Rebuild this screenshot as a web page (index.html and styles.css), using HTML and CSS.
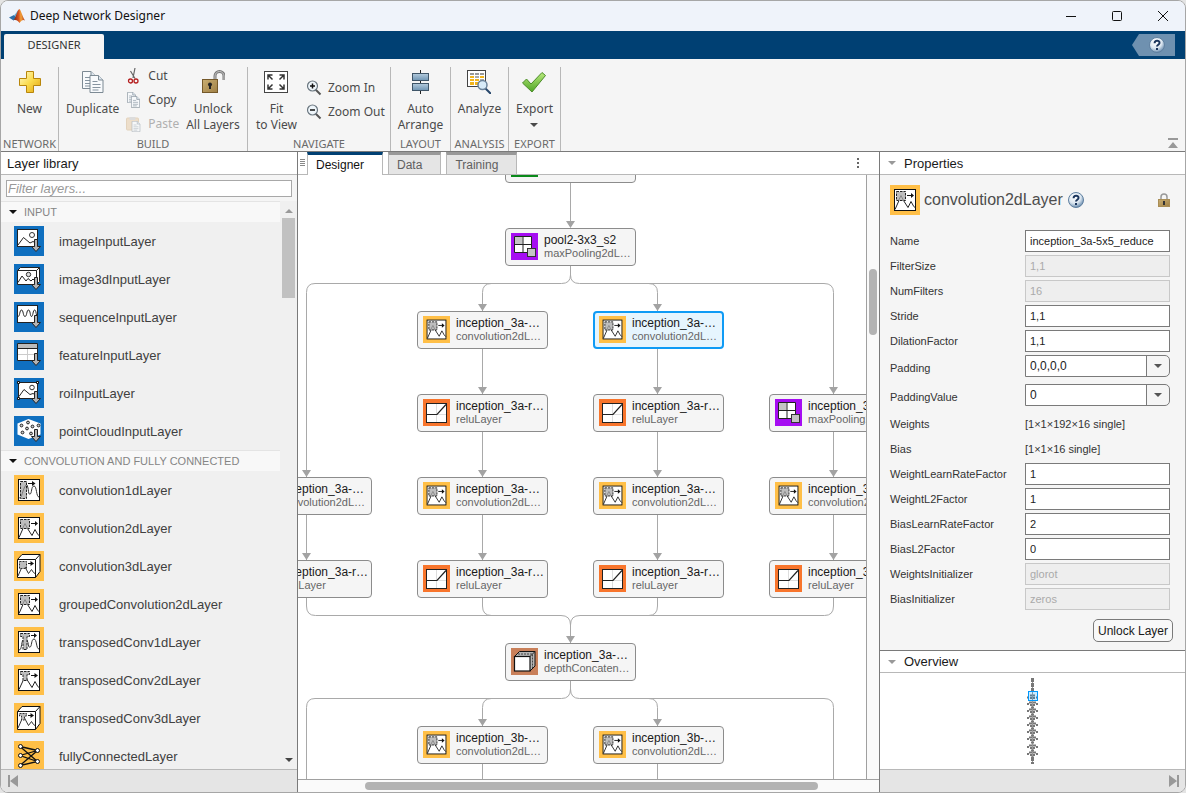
FILE: index.html
```html
<!DOCTYPE html>
<html lang="en">
<head>
    <meta charset="UTF-8">
    <meta name="viewport" content="width=device-width, initial-scale=1.0">
    <title>Deep Network Designer</title>
    <link rel="stylesheet" href="styles.css">
</head>
<body>
    <!-- Shared icons -->
    <svg class="defs" width="0" height="0" aria-hidden="true">
        <defs>
            <linearGradient id="gold" x1="0" y1="0" x2="1" y2="1">
                <stop offset="0" stop-color="#fffbd0"/>
                <stop offset="0.5" stop-color="#fbdc4c"/>
                <stop offset="1" stop-color="#e0a010"/>
            </linearGradient>
            <linearGradient id="brass" x1="0" y1="0" x2="1" y2="1">
                <stop offset="0" stop-color="#c9ae72"/>
                <stop offset="1" stop-color="#a08045"/>
            </linearGradient>
            <linearGradient id="steel" x1="0" y1="0" x2="0" y2="1">
                <stop offset="0" stop-color="#b4cbdd"/>
                <stop offset="1" stop-color="#6f95b4"/>
            </linearGradient>
            <linearGradient id="green" x1="0" y1="0" x2="0" y2="1">
                <stop offset="0" stop-color="#b9ea7c"/>
                <stop offset="1" stop-color="#4fa526"/>
            </linearGradient>
            <radialGradient id="ball" cx="0.4" cy="0.3" r="0.7">
                <stop offset="0" stop-color="#ffffff"/>
                <stop offset="0.6" stop-color="#dbe6f0"/>
                <stop offset="1" stop-color="#6d8fb0"/>
            </radialGradient>
            <linearGradient id="flame" x1="0" y1="0" x2="1" y2="0">
                <stop offset="0" stop-color="#7a1f14"/>
                <stop offset="0.45" stop-color="#d9531e"/>
                <stop offset="0.65" stop-color="#f3a33a"/>
                <stop offset="1" stop-color="#b5371b"/>
            </linearGradient>
        </defs>
        <symbol id="down-arrow" viewBox="0 0 30 30">
            <path d="M20.500 13.500h3v7h3l-4.500 5-4.500-5h3z" fill="#b3b3b3" stroke="#222"/>
        </symbol>
        <symbol id="cube" viewBox="0 0 30 30">
            <path d="M3.500 8.500l4.500-5h18v17l-4.500 6h-18z" fill="#fff" stroke="#111"/>
            <path d="M3.500 8.500h18v18M21.500 8.500l4.500-5" fill="none" stroke="#111"/>
        </symbol>
        <symbol id="image-input" viewBox="0 0 30 30">
            <rect width="30" height="30" fill="#0f6fbf"/>
            <rect x="3.500" y="3.500" width="20" height="17" fill="#fff" stroke="#222"/>
            <path d="M4 19l5.500-7.500 6.500 5.500 3-1.500 2 1" fill="none" stroke="#222"/>
            <circle cx="18" cy="9" r="2.500" fill="none" stroke="#333"/>
            <use href="#down-arrow"/>
        </symbol>
        <symbol id="image3d-input" viewBox="0 0 30 30">
            <rect width="30" height="30" fill="#0f6fbf"/>
            <path d="M3.500 6.500l3-3h19v14l-3 3h-19z" fill="#fff" stroke="#222"/>
            <path d="M3.500 6.500h19l3-3M22.500 6.500v14M4 18.500l4-6.500 4 5 2-2.500 3 2.500 2-2 2 2" fill="none" stroke="#222"/>
            <circle cx="14.500" cy="10.500" r="2.200" fill="#ddd" stroke="#333"/>
            <use href="#down-arrow"/>
        </symbol>
        <symbol id="sequence-input" viewBox="0 0 30 30">
            <rect width="30" height="30" fill="#0f6fbf"/>
            <rect x="3.500" y="3.500" width="20" height="17" fill="#fff" stroke="#222"/>
            <path d="M4 14.500c2 0 1.500-6.500 3.500-6.500s1.500 6.500 3.500 6.500 1.500-6.500 3.500-6.500 1.500 6.500 3 6.500 1.500-6.500 3-6.500 1.500 3 2 5" fill="none" stroke="#222"/>
            <use href="#down-arrow"/>
        </symbol>
        <symbol id="feature-input" viewBox="0 0 30 30">
            <rect width="30" height="30" fill="#0f6fbf"/>
            <rect x="3.500" y="3.500" width="20" height="17" fill="#fff"/>
            <path d="M4 4h19v4H4z" fill="#bbb"/>
            <path d="M13.500 8v12M4 14.500h19" stroke="#ccc"/>
            <path d="M3.500 3.500h20v17h-20zM4 8.500h19" fill="none" stroke="#222"/>
            <use href="#down-arrow"/>
        </symbol>
        <symbol id="roi-input" viewBox="0 0 30 30">
            <rect width="30" height="30" fill="#0f6fbf"/>
            <rect x="4.500" y="4.500" width="19" height="16" fill="#fff" stroke="#222"/>
            <path d="M5 18.500l5-7 6 5 3-1 2 1" fill="none" stroke="#222"/>
            <circle cx="18" cy="9.500" r="2.300" fill="none" stroke="#333"/>
            <path d="M3.500 3.500h2v2h-2zM22.500 3.500h2v2h-2zM3.500 19.500h2v2h-2z" fill="#fff" stroke="#111"/>
            <use href="#down-arrow"/>
        </symbol>
        <symbol id="cloud-input" viewBox="0 0 30 30">
            <rect width="30" height="30" fill="#0f6fbf"/>
            <path d="M3.500 7.500l11-4.500 12 4.500v11l-12 4.500-11-4.500z" fill="#fff"/>
            <g fill="#ccc" stroke="#222">
                <circle cx="14" cy="6.500" r="1.400"/><circle cx="7.500" cy="9.500" r="1.400"/>
                <circle cx="18.500" cy="10.500" r="1.400"/><circle cx="24.500" cy="9.500" r="1.400"/>
                <circle cx="13" cy="12.500" r="1.400"/><circle cx="8.500" cy="16.500" r="1.400"/>
                <circle cx="17" cy="17.500" r="1.400"/>
            </g>
            <use href="#down-arrow"/>
        </symbol>
        <symbol id="conv1d" viewBox="0 0 30 30">
            <rect width="30" height="30" fill="#ffbf47"/>
            <rect x="4.500" y="4.500" width="21" height="21" fill="#fff" stroke="#111"/>
            <rect x="6.500" y="6.500" width="6" height="17" fill="#bdbdbd" stroke="#222" stroke-dasharray="2.500 1"/>
            <path d="M5 23c3.500 0 3-8 7-13" fill="none" stroke="#777"/>
            <path d="M13 10c2 4 1 10 3 9 2 0 1-8 4-8s2 11 5 11" fill="none" stroke="#333"/>
            <path d="M14 8.500h5" stroke="#111"/><path d="M18 6l3.500 2.500-3.500 2.500z" fill="#111"/>
        </symbol>
        <symbol id="conv2d" viewBox="0 0 30 30">
            <rect width="30" height="30" fill="#ffbf47"/>
            <rect x="4.500" y="4.500" width="21" height="21" fill="#fff" stroke="#111"/>
            <rect x="6.500" y="6.500" width="9" height="9" fill="#bdbdbd" stroke="#222" stroke-dasharray="2.500 1"/>
            <path d="M5 24.500l4-9M13.500 15.500l4.500 7 3-6 2.500 4.500 2 2" fill="none" stroke="#222"/>
            <path d="M8.500 15.500l2.500-5 2.500 5" fill="none" stroke="#888"/>
            <path d="M17 10.500h5" stroke="#111"/><path d="M21 8l3 2.500-3 2.500z" fill="#111"/>
        </symbol>
        <symbol id="conv3d" viewBox="0 0 30 30">
            <rect width="30" height="30" fill="#ffbf47"/>
            <use href="#cube"/>
            <rect x="5.500" y="10.500" width="7" height="7" fill="#bdbdbd" stroke="#333" stroke-dasharray="2 1"/>
            <path d="M4 25l3.500-8M11 16l3.500 6.500 3-4 2 3 1.500 1" fill="none" stroke="#333"/>
            <path d="M14 12.500h3" stroke="#111"/><path d="M16.500 10l3.500 2.500-3.500 2.500z" fill="#111"/>
        </symbol>
        <symbol id="tconv1d" viewBox="0 0 30 30">
            <rect width="30" height="30" fill="#ffbf47"/>
            <rect x="4.500" y="4.500" width="21" height="21" fill="#fff" stroke="#111"/>
            <path d="M5 23c3 0 2-7 4-10M13 13c2 4 1 8 3 7 2 0 1-8 4-8s2 10 5 10" fill="none" stroke="#333"/>
            <path d="M6.500 6.500h9v3h-2.500v13h-4v-13h-2.500z" fill="#bdbdbd" stroke="#222" stroke-dasharray="2.500 1"/>
            <path d="M17 8.500h4" stroke="#111"/><path d="M20 6l3 2.500-3 2.500z" fill="#111"/>
        </symbol>
        <symbol id="tconv2d" viewBox="0 0 30 30">
            <rect width="30" height="30" fill="#ffbf47"/>
            <rect x="4.500" y="4.500" width="21" height="21" fill="#fff" stroke="#111"/>
            <path d="M5 24.500l5.500-12M12 13l6 9.500 3-6 2.500 4.500 2 2" fill="none" stroke="#222"/>
            <path d="M6.500 6.500h9v3h-2.500v6h-4v-6h-2.500z" fill="#bdbdbd" stroke="#222" stroke-dasharray="2.500 1"/>
            <path d="M17 10.500h4" stroke="#111"/><path d="M20.500 8l3.500 2.500-3.500 2.500z" fill="#111"/>
        </symbol>
        <symbol id="tconv3d" viewBox="0 0 30 30">
            <rect width="30" height="30" fill="#ffbf47"/>
            <use href="#cube"/>
            <path d="M4 25l4-9M10.500 15l4 7.500 3-4 2 3 1.500 1" fill="none" stroke="#333"/>
            <path d="M5.500 10.500h7v2.500h-2v4h-3v-4h-2z" fill="#bdbdbd" stroke="#333" stroke-dasharray="2 1"/>
            <path d="M14 12.500h3" stroke="#111"/><path d="M16.500 10l3.500 2.500-3.500 2.500z" fill="#111"/>
        </symbol>
        <symbol id="fully" viewBox="0 0 30 30">
            <rect width="30" height="30" fill="#ffbf47"/>
            <path d="M6 5.500L23.500 9.500 6 14.500 23.500 20.500 6 24.500 23.500 9.500M23.500 20.500L6 5.500" fill="none" stroke="#111" stroke-width="1.300"/>
            <g fill="#fff" stroke="#111">
                <circle cx="6.500" cy="5.500" r="2"/><circle cx="6.500" cy="14.500" r="2"/><circle cx="6.500" cy="24.500" r="2"/>
                <circle cx="23.500" cy="9.500" r="2"/><circle cx="23.500" cy="20.500" r="2"/>
            </g>
        </symbol>
        <symbol id="pool" viewBox="0 0 27 27">
            <rect width="27" height="27" fill="#a60df2"/>
            <rect x="3.500" y="3.500" width="17" height="16" fill="#fff"/>
            <rect x="3.500" y="3.500" width="8" height="8" fill="#c4c4c4"/>
            <path d="M3.500 3.500h17v16h-17zM12 3.500v16M3.500 11.500h17" fill="none" stroke="#222"/>
            <rect x="16.500" y="15.500" width="8" height="8" fill="#c4c4c4" stroke="#333"/>
        </symbol>
        <symbol id="relu" viewBox="0 0 27 27">
            <rect width="27" height="27" fill="#f8752c"/>
            <rect x="3.500" y="4.500" width="20" height="19" fill="#fff" stroke="#222"/>
            <path d="M13.500 5v18M14 15.500h9" stroke="#ddd"/>
            <path d="M4 15.500h10l9-10" fill="none" stroke="#222" stroke-width="1.200"/>
        </symbol>
        <symbol id="concat" viewBox="0 0 27 27">
            <rect width="27" height="27" fill="#c9805a"/>
            <path d="M3.500 8.500l5-5h15.500v14.500l-5 5z" fill="#b5b5b5" stroke="#111"/>
            <rect x="3.500" y="8.500" width="15.500" height="14.500" fill="#fff" stroke="#111" stroke-width="1.200"/>
            <path d="M19 8.500l5-5" fill="none" stroke="#222"/>
            <path d="M7 6h14.500v14" fill="none" stroke="#444" stroke-dasharray="2 1"/>
        </symbol>
        <symbol id="page" viewBox="0 0 14 18">
            <path d="M0.500 0.500h8.500l4.500 4.500v12.500h-13z" fill="#f8fafc" stroke="#7d8a94"/>
            <path d="M9 0.500v4.500h4.500" fill="#dde6ee" stroke="#7d8a94"/>
            <path d="M3 6.500h5M3 9.500h8M3 12.500h8M3 15h6" stroke="#8694a0"/>
        </symbol>
        <symbol id="caret" viewBox="0 0 8 4"><path d="M0 0h8L4 4z" fill="currentColor"/></symbol>
        <symbol id="help" viewBox="0 0 16 16">
            <circle cx="8" cy="8" r="7.500" fill="url(#ball)" stroke="#5f7f9f"/>
            <path d="M5.600 6.200C5.600 3 10.700 3 10.500 6c0 1.800-2.500 1.800-2.500 3.600M8 11v2" fill="none" stroke="#1b355c" stroke-width="2"/>
        </symbol>
        <symbol id="magnifier" viewBox="0 0 16 16">
            <path d="M9.500 9.500l5 5" stroke="#555" stroke-width="2"/>
            <circle cx="6.500" cy="6" r="5" fill="#eef5fa" stroke="#6b7780" stroke-width="1.200"/>
        </symbol>
    </svg>

    <div class="window">
        <header class="titlebar">
            <svg class="logo" width="16" height="14" viewBox="0 0 16 14">
                <path d="M0 8.500l5-2.500 2.500 2.500-3 3z" fill="#2d6fa8"/>
                <path d="M5 6c2-0.500 3-4.500 5-5.500L7.500 9z" fill="#69a8cf"/>
                <path d="M4.500 11.500C7 9 8 1 10.500 0c1.500 1 3 8 5.500 11.500-2-1.500-3.500 0-5.500 2.500C9.500 12.500 7 10 4.500 11.500z" fill="url(#flame)"/>
            </svg>
            <h1>Deep Network Designer</h1>
            <div class="window-buttons">
                <button type="button" aria-label="Minimize"><svg width="12" height="12"><path d="M1 6.500h10" stroke="#111"/></svg></button>
                <button type="button" aria-label="Maximize"><svg width="12" height="12"><rect x="1.500" y="1.500" width="9" height="9" rx="1" fill="none" stroke="#111"/></svg></button>
                <button type="button" aria-label="Close"><svg width="12" height="12"><path d="M1 1l10 10M11 1L1 11" stroke="#111"/></svg></button>
            </div>
        </header>

        <nav class="ribbon-tabs">
            <button type="button" class="ribbon-tab">DESIGNER</button>
            <button type="button" class="help-button" aria-label="Help"><svg width="16" height="16"><use href="#help"/></svg></button>
        </nav>

        <div class="toolstrip">
            <section class="group network">
                <div class="tools">
                    <button type="button" class="tool">
                        <svg width="24" height="24" viewBox="0 0 24 24"><path d="M8.500 1.500h7v7h7v7h-7v7h-7v-7h-7v-7h7z" fill="url(#gold)" stroke="#b8860b"/></svg>
                        <span>New</span>
                    </button>
                </div>
                <h2>NETWORK</h2>
            </section>
            <section class="group build">
                <div class="tools">
                    <button type="button" class="tool">
                        <svg width="24" height="24" viewBox="0 0 24 24"><use href="#page" x="1" y="1" width="14" height="18"/><use href="#page" x="8" y="5" width="15" height="18"/></svg>
                        <span>Duplicate</span>
                    </button>
                    <div class="stack">
                        <button type="button" class="small-tool">
                            <svg width="16" height="16" viewBox="0 0 16 16">
                                <path d="M9 0L7 10M4.500 3l4.500 7.500" stroke="#666" stroke-width="1.200"/>
                                <circle cx="4.500" cy="13" r="2" fill="none" stroke="#b52020" stroke-width="1.300"/>
                                <circle cx="10" cy="13" r="2" fill="none" stroke="#b52020" stroke-width="1.300"/>
                            </svg>Cut
                        </button>
                        <button type="button" class="small-tool">
                            <svg width="16" height="16" viewBox="0 0 16 16"><use href="#page" x="1" y="0" width="9" height="11"/><use href="#page" x="5" y="4" width="9" height="12"/></svg>Copy
                        </button>
                        <button type="button" class="small-tool" disabled>
                            <svg width="16" height="16" viewBox="0 0 16 16"><rect x="0.500" y="2" width="12" height="12" rx="1" fill="#e9cfae" stroke="#d8bd98"/><path d="M3.500 1h6v3h-6z" fill="#ccc"/><use href="#page" x="5" y="5" width="10" height="11"/></svg>Paste
                        </button>
                    </div>
                    <button type="button" class="tool">
                        <svg width="24" height="24" viewBox="0 0 24 24">
                            <path d="M14 11V6a4.500 4.500 0 0 1 9 0v4" fill="none" stroke="#777" stroke-width="3"/>
                            <path d="M14 11V6a4.500 4.500 0 0 1 9 0v4" fill="none" stroke="#c8c8c8"/>
                            <rect x="1.500" y="9.500" width="15" height="13" fill="url(#brass)" stroke="#75592a"/>
                            <circle cx="9" cy="14.500" r="2" fill="#222"/><path d="M8 15h2v4H8z" fill="#222"/>
                        </svg>
                        <span>Unlock<br>All Layers</span>
                    </button>
                </div>
                <h2>BUILD</h2>
            </section>
            <section class="group navigate">
                <div class="tools">
                    <button type="button" class="tool">
                        <svg width="24" height="24" viewBox="0 0 24 24">
                            <rect x="0.500" y="1.500" width="23" height="21" fill="#fff" stroke="#444"/>
                            <path d="M4 9.500V5h4.500M20 9.500V5h-4.500M4 14.500v4.500h4.500M20 14.500v4.500h-4.500M4.500 5.500l4 4M19.500 5.500l-4 4M4.500 18.500l4-4M19.500 18.500l-4-4" fill="none" stroke="#333" stroke-width="1.500"/>
                        </svg>
                        <span>Fit<br>to View</span>
                    </button>
                    <div class="stack">
                        <button type="button" class="small-tool"><svg width="16" height="16"><use href="#magnifier"/><path d="M4 6h5M6.500 3.500v5" stroke="#111" stroke-width="1.500"/></svg>Zoom In</button>
                        <button type="button" class="small-tool"><svg width="16" height="16"><use href="#magnifier"/><path d="M4 6h5" stroke="#111" stroke-width="1.500"/></svg>Zoom Out</button>
                    </div>
                </div>
                <h2>NAVIGATE</h2>
            </section>
            <section class="group layout">
                <div class="tools">
                    <button type="button" class="tool">
                        <svg width="24" height="24" viewBox="0 0 24 24">
                            <path d="M12.500 0v24" stroke="#222"/>
                            <rect x="4.500" y="3.500" width="16" height="7" fill="url(#steel)" stroke="#3f5568"/>
                            <rect x="4.500" y="13.500" width="16" height="7" fill="url(#steel)" stroke="#3f5568"/>
                        </svg>
                        <span>Auto<br>Arrange</span>
                    </button>
                </div>
                <h2>LAYOUT</h2>
            </section>
            <section class="group analysis">
                <div class="tools">
                    <button type="button" class="tool">
                        <svg width="24" height="24" viewBox="0 0 24 24">
                            <rect x="0.500" y="0.500" width="18" height="16" fill="#fff" stroke="#444"/>
                            <path d="M3 3h4v2H3zM8 3h4v2H8zM13 3h4v2h-4z" fill="#999"/>
                            <path d="M3 6h4v2H3zM13 6h4v2h-4zM8 9h4v2H8zM3 12h4v3H3zM8 12h4v3H8zM3 9h4v2H3z" fill="#f2b51d"/>
                            <path d="M8 6h4v2H8zM13 9h4v2h-4z" fill="#aaa"/>
                            <path d="M18 18l6 6" stroke="#27476b" stroke-width="2"/>
                            <circle cx="15.500" cy="15" r="4.500" fill="#d8ebf8" stroke="#6b8299" stroke-width="1.500"/>
                        </svg>
                        <span>Analyze</span>
                    </button>
                </div>
                <h2>ANALYSIS</h2>
            </section>
            <section class="group export">
                <div class="tools">
                    <button type="button" class="tool">
                        <svg width="24" height="24" viewBox="0 0 24 24"><path d="M0.500 13l4-4 4.500 5L20 2.500l3.500 3L10 22z" fill="url(#green)" stroke="#4c8c2a"/></svg>
                        <span>Export</span>
                        <svg class="menu-caret" width="8" height="4"><use href="#caret"/></svg>
                    </button>
                </div>
                <h2>EXPORT</h2>
            </section>
            <button type="button" class="collapse" aria-label="Collapse toolstrip"><svg width="10" height="10"><path d="M0 0h10v2H0zM5 4l5 6H0z" fill="#999"/></svg></button>
        </div>

        <main class="workspace">
            <aside class="library">
                <h2 class="panel-title">Layer library</h2>
                <div class="filter"><input type="text" placeholder="Filter layers..." aria-label="Filter layers"></div>
                <div class="library-body">
                    <div class="layer-list">
                        <button type="button" class="category"><svg width="8" height="4"><use href="#caret"/></svg>INPUT</button>
                        <ul>
                            <li><svg width="30" height="30"><use href="#image-input"/></svg>imageInputLayer</li>
                            <li><svg width="30" height="30"><use href="#image3d-input"/></svg>image3dInputLayer</li>
                            <li><svg width="30" height="30"><use href="#sequence-input"/></svg>sequenceInputLayer</li>
                            <li><svg width="30" height="30"><use href="#feature-input"/></svg>featureInputLayer</li>
                            <li><svg width="30" height="30"><use href="#roi-input"/></svg>roiInputLayer</li>
                            <li><svg width="30" height="30"><use href="#cloud-input"/></svg>pointCloudInputLayer</li>
                        </ul>
                        <button type="button" class="category"><svg width="8" height="4"><use href="#caret"/></svg>CONVOLUTION AND FULLY CONNECTED</button>
                        <ul>
                            <li><svg width="30" height="30"><use href="#conv1d"/></svg>convolution1dLayer</li>
                            <li><svg width="30" height="30"><use href="#conv2d"/></svg>convolution2dLayer</li>
                            <li><svg width="30" height="30"><use href="#conv3d"/></svg>convolution3dLayer</li>
                            <li><svg width="30" height="30"><use href="#conv2d"/></svg>groupedConvolution2dLayer</li>
                            <li><svg width="30" height="30"><use href="#tconv1d"/></svg>transposedConv1dLayer</li>
                            <li><svg width="30" height="30"><use href="#tconv2d"/></svg>transposedConv2dLayer</li>
                            <li><svg width="30" height="30"><use href="#tconv3d"/></svg>transposedConv3dLayer</li>
                            <li><svg width="30" height="30"><use href="#fully"/></svg>fullyConnectedLayer</li>
                        </ul>
                    </div>
                    <div class="list-scroll">
                        <svg width="8" height="4"><path d="M0 4h8L4 0z" fill="#999"/></svg>
                        <div class="list-thumb"></div>
                        <svg class="scroll-down" width="8" height="4"><use href="#caret"/></svg>
                    </div>
                </div>
                <div class="statusbar"><button type="button" aria-label="Collapse library"><svg width="10" height="12"><path d="M0 0h2v12H0zM10 0v12L2 6z" fill="#999"/></svg></button></div>
            </aside>

            <section class="document">
                <div class="doc-tabs">
                    <svg class="grip" width="5" height="8"><path d="M0 0.500h5M0 2.500h5M0 4.500h5M0 6.500h5" stroke="#888"/></svg>
                    <button type="button" class="doc-tab active">Designer</button>
                    <button type="button" class="doc-tab">Data</button>
                    <button type="button" class="doc-tab">Training</button>
                    <button type="button" class="kebab" aria-label="More"><svg width="2" height="10"><path d="M0 0h2v2H0zM0 4h2v2H0zM0 8h2v2H0z" fill="#666"/></svg></button>
                </div>
                <div class="canvas-row">
                    <div class="canvas">
                        <svg class="edges" width="568" height="604">
                            <g fill="none" stroke="#a9a9a9">
                                <path d="M272.500 7v40"/>
                                <path d="M272.500 91v9q0 8.500-9 8.500H17q-8.500 0-8.500 9V302"/>
                                <path d="M193.500 108.500q-9 0-9 9V136M184.500 173v46M184.500 256v46M184.500 339v46"/>
                                <path d="M272.500 91v9q0 8.500 9 8.500H526q9.500 0 9.500 9V219M535.500 256v46M535.500 339v46"/>
                                <path d="M350.500 108.500q9 0 9 9V136M359.500 173v46M359.500 256v46M359.500 339v46M8.500 339v46"/>
                                <path d="M8.500 422v9q0 9.500 9 9.500H263q9.500 0 9.500 9.500V468M184.500 422v9q0 9.500 9 9.500"/>
                                <path d="M535.500 422v9q0 9.500-9 9.500H282q-9.500 0-9.500 9.500M359.500 422v9q0 9.500-9 9.500"/>
                                <path d="M272.500 505v9q0 9.500-9 9.500H17q-8.500 0-8.500 9V604M193.500 523.500q-9 0-9 9V551M184.500 588v16"/>
                                <path d="M272.500 505v9q0 9.500 9 9.500H526q9.500 0 9.500 9V604M350.500 523.500q9 0 9 9V551M359.500 588v16"/>
                            </g>
                            <path d="M268 46h9l-4.500 7zM180 129h9l-4.500 7zM355 129h9l-4.500 7zM180 212h9l-4.500 7zM355 212h9l-4.500 7zM531 212h9l-4.500 7zM4 295h9l-4.500 7zM180 295h9l-4.500 7zM355 295h9l-4.500 7zM531 295h9l-4.500 7zM4 378h9l-4.500 7zM180 378h9l-4.500 7zM355 378h9l-4.500 7zM531 378h9l-4.500 7zM268 461h9l-4.500 7zM180 544h9l-4.500 7zM355 544h9l-4.500 7z" fill="#a3a3a3"/>
                        </svg>
                        <div class="node col-mid row-0"><i class="norm-icon"></i></div>
                        <div class="node col-mid row-1"><svg width="27" height="27"><use href="#pool"/></svg><p>pool2-3x3_s2<small>maxPooling2dL…</small></p></div>

                        <div class="node col-2 row-2"><svg width="27" height="27"><use href="#conv2d"/></svg><p>inception_3a-…<small>convolution2dL…</small></p></div>
                        <div class="node col-3 row-2 selected"><svg width="27" height="27"><use href="#conv2d"/></svg><p>inception_3a-…<small>convolution2dL…</small></p></div>

                        <div class="node col-2 row-3"><svg width="27" height="27"><use href="#relu"/></svg><p>inception_3a-r…<small>reluLayer</small></p></div>
                        <div class="node col-3 row-3"><svg width="27" height="27"><use href="#relu"/></svg><p>inception_3a-r…<small>reluLayer</small></p></div>
                        <div class="node col-4 row-3"><svg width="27" height="27"><use href="#pool"/></svg><p>inception_3a-…<small>maxPooling2dL…</small></p></div>

                        <div class="node col-1 row-4"><svg width="27" height="27"><use href="#conv2d"/></svg><p>inception_3a-…<small>convolution2dL…</small></p></div>
                        <div class="node col-2 row-4"><svg width="27" height="27"><use href="#conv2d"/></svg><p>inception_3a-…<small>convolution2dL…</small></p></div>
                        <div class="node col-3 row-4"><svg width="27" height="27"><use href="#conv2d"/></svg><p>inception_3a-…<small>convolution2dL…</small></p></div>
                        <div class="node col-4 row-4"><svg width="27" height="27"><use href="#conv2d"/></svg><p>inception_3a-…<small>convolution2dL…</small></p></div>

                        <div class="node col-1 row-5"><svg width="27" height="27"><use href="#relu"/></svg><p>inception_3a-r…<small>reluLayer</small></p></div>
                        <div class="node col-2 row-5"><svg width="27" height="27"><use href="#relu"/></svg><p>inception_3a-r…<small>reluLayer</small></p></div>
                        <div class="node col-3 row-5"><svg width="27" height="27"><use href="#relu"/></svg><p>inception_3a-r…<small>reluLayer</small></p></div>
                        <div class="node col-4 row-5"><svg width="27" height="27"><use href="#relu"/></svg><p>inception_3a-r…<small>reluLayer</small></p></div>

                        <div class="node col-mid row-6"><svg width="27" height="27"><use href="#concat"/></svg><p>inception_3a-…<small>depthConcaten…</small></p></div>

                        <div class="node col-2 row-7"><svg width="27" height="27"><use href="#conv2d"/></svg><p>inception_3b-…<small>convolution2dL…</small></p></div>
                        <div class="node col-3 row-7"><svg width="27" height="27"><use href="#conv2d"/></svg><p>inception_3b-…<small>convolution2dL…</small></p></div>
                    </div>
                    <div class="v-scroll"><div class="v-thumb"></div></div>
                </div>
                <div class="h-scroll"><div class="h-thumb"></div></div>
            </section>

            <aside class="inspector">
                <h2 class="panel-title"><svg width="8" height="4"><use href="#caret"/></svg>Properties</h2>
                <form class="properties">
                    <div class="layer-head">
                        <svg width="30" height="30"><use href="#conv2d"/></svg>
                        <h3>convolution2dLayer</h3>
                        <svg width="16" height="16"><use href="#help"/></svg>
                        <svg class="lock" width="12" height="14" viewBox="0 0 12 14">
                            <path d="M3 7V4a3 3 0 0 1 6 0v3" fill="none" stroke="#999" stroke-width="1.500"/>
                            <rect x="0.500" y="6.500" width="11" height="7" fill="url(#brass)" stroke="#a98d55"/>
                            <path d="M5 8h2v4H5z" fill="#333"/>
                        </svg>
                    </div>
                    <div class="row"><label for="name">Name</label><input id="name" type="text" value="inception_3a-5x5_reduce"></div>
                    <div class="row"><label for="filter-size">FilterSize</label><input id="filter-size" type="text" value="1,1" disabled></div>
                    <div class="row"><label for="num-filters">NumFilters</label><input id="num-filters" type="text" value="16" disabled></div>
                    <div class="row"><label for="stride">Stride</label><input id="stride" type="text" value="1,1"></div>
                    <div class="row"><label for="dilation">DilationFactor</label><input id="dilation" type="text" value="1,1"></div>
                    <div class="row tall"><label for="padding">Padding</label><span class="dropdown"><select id="padding"><option>0,0,0,0</option><option>same</option></select><svg width="8" height="4"><use href="#caret"/></svg></span></div>
                    <div class="row tall"><label for="padding-value">PaddingValue</label><span class="dropdown"><select id="padding-value"><option>0</option><option>replicate</option></select><svg width="8" height="4"><use href="#caret"/></svg></span></div>
                    <div class="row"><label for="weights">Weights</label><output id="weights">[1×1×192×16 single]</output></div>
                    <div class="row"><label for="bias">Bias</label><output id="bias">[1×1×16 single]</output></div>
                    <div class="row"><label for="wlrf">WeightLearnRateFactor</label><input id="wlrf" type="text" value="1"></div>
                    <div class="row"><label for="wl2">WeightL2Factor</label><input id="wl2" type="text" value="1"></div>
                    <div class="row"><label for="blrf">BiasLearnRateFactor</label><input id="blrf" type="text" value="2"></div>
                    <div class="row"><label for="bl2">BiasL2Factor</label><input id="bl2" type="text" value="0"></div>
                    <div class="row"><label for="winit">WeightsInitializer</label><input id="winit" type="text" value="glorot" disabled></div>
                    <div class="row"><label for="binit">BiasInitializer</label><input id="binit" type="text" value="zeros" disabled></div>
                    <button type="button" class="unlock">Unlock Layer</button>
                </form>
                <h2 class="panel-title overview-title"><svg width="8" height="4"><use href="#caret"/></svg>Overview</h2>
                <div class="overview">
                    <svg width="12" height="86" viewBox="0 0 12 86">
                        <path d="M5.500 0v86" stroke="#999"/>
                        <path d="M5.500 0v14M5.500 79v7" stroke="#777" stroke-width="3" stroke-dasharray="4 1"/>
                        <g stroke="#777" stroke-width="2">
                            <path d="M0 19.500h2M3 17.500h2M6 17.500h2M9 19.500h2M3 20h2M6 20h2"/>
                            <path d="M0 26h2M2 24.500h3M6 24.500h3M9 26h2M3 27h2M6 27h2M4 29.500h3"/>
                            <path d="M0 33h2M2 31.500h3M6 31.500h3M9 33h2M3 34h2M6 34h2M4 36.500h3"/>
                            <path d="M0 40h2M2 38.500h3M6 38.500h3M9 40h2M3 41h2M6 41h2M4 43.500h3"/>
                            <path d="M0 47h2M2 45.500h3M6 45.500h3M9 47h2M3 48h2M6 48h2M4 50.500h3"/>
                            <path d="M0 54h2M2 52.500h3M6 52.500h3M9 54h2M3 55h2M6 55h2M4 57.500h3"/>
                            <path d="M0 61h2M2 59.500h3M6 59.500h3M9 61h2M3 62h2M6 62h2M4 64.500h3"/>
                            <path d="M0 69h2M2 67.500h3M6 67.500h3M9 69h2M3 70h2M6 70h2M4 72.500h3"/>
                            <path d="M0 76h2M2 74.500h3M6 74.500h3M9 76h2M3 77h2M6 77h2M4 79.500h3"/>
                        </g>
                        <rect x="1.500" y="13.500" width="9" height="9" fill="#0099ff" fill-opacity="0.200" stroke="#0099ff"/>
                    </svg>
                </div>
                <div class="statusbar right"><button type="button" aria-label="Collapse inspector"><svg width="10" height="12"><path d="M8 0h2v12H8zM0 0v12l8-6z" fill="#999"/></svg></button></div>
            </aside>
        </main>
    </div>
</body>
</html>
```
FILE: styles.css
```css
* {
    box-sizing: border-box;
}

body {
    font-family: "Liberation Sans", Arial, sans-serif;
    font-size: 12px;
    margin: 0;
    background-color: #e4e4e4;
    color: #1a1a1a;
}

h1, h2, h3, p, ul {
    margin: 0;
    padding: 0;
    font-weight: normal;
}

button {
    font: inherit;
    color: inherit;
    background: none;
    border: none;
    padding: 0;
    cursor: pointer;
}

svg {
    display: block;
    flex-shrink: 0;
}

.defs {
    position: absolute;
}

.window {
    display: flex;
    flex-direction: column;
    height: 100vh;
    border: 1px solid #a6a6a6;
    border-radius: 8px;
    overflow: hidden;
    background-color: #f5f5f5;
}

/* Title bar */
.titlebar {
    display: flex;
    align-items: center;
    height: 30px;
    padding: 0 16px 0 8px;
    background-color: #eff3fa;
    font-family: "Noto Sans", sans-serif;
}

.titlebar h1 {
    margin-left: 5px;
    font-size: 12px;
    line-height: 16px;
    color: #111;
}

.window-buttons {
    display: flex;
    gap: 34px;
    margin-left: auto;
}

/* Ribbon */
.ribbon-tabs {
    display: flex;
    justify-content: space-between;
    align-items: flex-end;
    height: 28px;
    padding: 0 10px 0 3px;
    background-color: #004073;
    font-family: "Noto Sans", sans-serif;
}

.ribbon-tab {
    width: 100px;
    height: 25px;
    padding-bottom: 4px;
    border-radius: 2px 2px 0 0;
    background-color: #f5f5f5;
    color: #333;
    font-size: 11px;
}

.help-button {
    display: flex;
    justify-content: center;
    align-items: center;
    width: 43px;
    height: 22px;
    margin-bottom: 3px;
    padding-left: 7px;
    background-color: #6f91b0;
    clip-path: polygon(7px 0, 100% 0, 100% 100%, 7px 100%, 0 50%);
}

.toolstrip {
    display: flex;
    height: 93px;
    padding-top: 8px;
    border-bottom: 1px solid #7a7a7a;
    font-family: "Noto Sans", sans-serif;
    color: #4a4a4a;
}

.group {
    display: flex;
    flex-direction: column;
    justify-content: space-between;
    border-right: 1px solid #b8b8b8;
}

.group h2 {
    font-size: 11px;
    line-height: 14px;
    text-align: center;
    color: #6a6a6a;
}

.network {
    width: 58px;
}

.build {
    width: 189px;
}

.navigate {
    width: 143px;
}

.layout {
    width: 60px;
}

.analysis {
    width: 58px;
}

.export {
    width: 52px;
}

.tools {
    display: flex;
    flex: 1;
    min-height: 0;
    justify-content: center;
}

.build .tools {
    justify-content: flex-start;
    gap: 7px;
    padding-left: 7px;
}

.navigate .tools {
    justify-content: flex-start;
    gap: 9px;
    padding-left: 8px;
}

.tool {
    display: flex;
    flex-direction: column;
    align-items: center;
    padding-top: 3px;
    line-height: 16px;
}

.tool span {
    margin-top: 7px;
    white-space: nowrap;
}

.menu-caret {
    margin-top: 6px;
}

.stack {
    display: flex;
    flex-direction: column;
}

.navigate .stack {
    padding-top: 12px;
}

.small-tool {
    display: flex;
    flex-shrink: 0;
    align-items: center;
    gap: 6px;
    height: 24px;
    padding-bottom: 7px;
    white-space: nowrap;
}

.small-tool:disabled {
    color: #b0b0b0;
    cursor: default;
}

.small-tool:disabled svg {
    opacity: 0.6;
}

.collapse {
    align-self: flex-end;
    margin: 0 7px 3px auto;
}

/* Workspace */
.workspace {
    display: flex;
    flex: 1;
    min-height: 0;
}

.panel-title {
    display: flex;
    flex-shrink: 0;
    align-items: center;
    gap: 8px;
    height: 23px;
    padding: 0 6px;
    border-bottom: 1px solid #b8b8b8;
    background-color: #fff;
    font-size: 13px;
}

.panel-title svg {
    margin-left: 2px;
    color: #999;
}

.statusbar {
    display: flex;
    flex-shrink: 0;
    align-items: center;
    height: 23px;
    padding: 0 7px;
    border-top: 1px solid #b8b8b8;
    background-color: #e5e5e5;
}

.statusbar.right {
    justify-content: flex-end;
    padding-right: 6px;
}

/* Layer library */
.library {
    display: flex;
    flex-direction: column;
    width: 297px;
    border-right: 1px solid #7a7a7a;
    background-color: #f0f0f0;
}

.filter {
    height: 26px;
    padding: 5px 5px 0;
    background-color: #f5f5f5;
}

.filter input {
    display: block;
    width: 100%;
    height: 17px;
    padding: 0 1px;
    border: 1px solid #a8a8a8;
    font: italic 13px "Liberation Sans", Arial, sans-serif;
}

.filter input::placeholder {
    color: #999;
}

.library-body {
    display: flex;
    flex: 1;
    min-height: 0;
}

.layer-list {
    flex: 1;
    overflow: hidden;
}

.category {
    display: flex;
    align-items: center;
    gap: 7px;
    width: 100%;
    height: 21px;
    padding: 0 8px;
    border-top: 1px solid #e4e4e4;
    background-color: #f8f8f8;
    color: #858585;
    font-size: 11px;
}

.category svg {
    color: #111;
}

.layer-list li {
    display: flex;
    align-items: center;
    gap: 15px;
    height: 38px;
    padding-left: 13px;
    color: #404040;
    font-size: 13px;
}

.list-scroll {
    display: flex;
    flex-direction: column;
    align-items: center;
    width: 17px;
    padding: 8px 2px 7px;
    color: #444;
}

.list-thumb {
    width: 13px;
    height: 80px;
    margin-top: 5px;
    background-color: #c1c1c1;
}

.scroll-down {
    margin-top: auto;
}

/* Document area */
.document {
    display: flex;
    flex: 1;
    flex-direction: column;
    min-width: 0;
    background-color: #fff;
}

.doc-tabs {
    display: flex;
    gap: 5px;
    height: 23px;
    border-bottom: 1px solid #b8b8b8;
}

.grip {
    margin: 7px -3px 0 2px;
}

.doc-tab {
    height: 22px;
    padding: 0 18px 0 8px;
    border: 1px solid #b8b8b8;
    border-top: 3px solid #999;
    border-bottom: none;
    background-color: #e5e5e5;
    color: #606060;
}

.doc-tab.active {
    height: 23px;
    border-top-color: #004073;
    background-color: #fff;
    color: #111;
}

.kebab {
    margin: 0 20px 0 auto;
}

.canvas-row {
    display: flex;
    flex: 1;
    min-height: 0;
}

.canvas {
    position: relative;
    flex: 1;
    overflow: hidden;
}

.edges {
    position: absolute;
    top: 0;
    left: 0;
}

.node {
    position: absolute;
    display: flex;
    gap: 6px;
    width: 131px;
    height: 38px;
    padding: 4px 3px 4px 5px;
    border: 1px solid #8c8c8c;
    border-radius: 4px;
    background-color: #f5f5f5;
    white-space: nowrap;
}

.node p {
    line-height: 14px;
}

.node small {
    display: block;
    font-size: 11px;
    line-height: 13px;
    color: #666;
}

.node.selected {
    padding: 3px 2px 3px 4px;
    border: 2px solid #0f9bf5;
    background-color: #e6f5fe;
}

.norm-icon {
    width: 27px;
    height: 27px;
    background-color: #0a8a1a;
}

.col-1 { left: -57px; }
.col-2 { left: 119px; }
.col-mid { left: 207px; }
.col-3 { left: 295px; }
.col-4 { left: 471px; }

.row-0 { top: -30px; }
.row-1 { top: 53px; }
.row-2 { top: 136px; }
.row-3 { top: 219px; }
.row-4 { top: 302px; }
.row-5 { top: 385px; }
.row-6 { top: 468px; }
.row-7 { top: 551px; }

.v-scroll {
    width: 13px;
    padding: 94px 2px 0;
    border-left: 1px solid #a0a0a0;
    background-color: #fafafa;
}

.v-thumb {
    width: 8px;
    height: 66px;
    border-radius: 4px;
    background-color: #b3b3b3;
}

.h-scroll {
    height: 13px;
    padding: 2px 61px 0 67px;
    border-top: 1px solid #a0a0a0;
    background-color: #fafafa;
}

.h-thumb {
    height: 8px;
    border-radius: 4px;
    background-color: #b3b3b3;
}

/* Properties and overview */
.inspector {
    display: flex;
    flex-direction: column;
    width: 306px;
    border-left: 1px solid #7a7a7a;
}

.properties {
    display: flex;
    flex: 1;
    flex-direction: column;
    padding: 10px 15px 8px 10px;
    font-size: 11px;
}

.layer-head {
    display: flex;
    align-items: center;
    gap: 4px;
    margin-bottom: 13px;
}

.layer-head h3 {
    margin-right: 1px;
    font-size: 16px;
    color: #4d4d4d;
}

.lock {
    margin-left: auto;
}

.row {
    display: flex;
    align-items: center;
    height: 25px;
}

.row.tall {
    height: 29px;
}

.row label {
    width: 135px;
    color: #333;
}

.row input {
    flex: 1;
    min-width: 0;
    height: 22px;
    padding: 0 4px;
    border: 1px solid #7a7a7a;
    background-color: #fff;
    color: #222;
    font: inherit;
}

.row input:disabled {
    border-color: #c8c8c8;
    background-color: #eee;
    color: #aaa;
}

.row output {
    color: #333;
}

.dropdown {
    position: relative;
    flex: 1;
    margin-bottom: 3px;
}

.dropdown select {
    display: block;
    appearance: none;
    width: 100%;
    height: 22px;
    padding: 0 4px;
    border: 1px solid #7a7a7a;
    border-radius: 0 5px 5px 0;
    background: linear-gradient(90deg, #7a7a7a 1px, #f5f5f5 1px) right / 23px 100% no-repeat #fff;
    color: #222;
    font: inherit;
    font-size: 12px;
}

.dropdown svg {
    position: absolute;
    top: 9px;
    right: 8px;
    color: #555;
    pointer-events: none;
}

.unlock {
    align-self: flex-end;
    width: 80px;
    height: 23px;
    margin: auto -3px 0 0;
    border: 1px solid #7a7a7a;
    border-radius: 5px;
    background-color: #f8f8f8;
    font-size: 12px;
    white-space: nowrap;
}

.overview-title {
    border-top: 1px solid #7a7a7a;
}

.overview {
    display: flex;
    justify-content: center;
    height: 96px;
    padding-top: 5px;
    background-color: #fff;
}
```
